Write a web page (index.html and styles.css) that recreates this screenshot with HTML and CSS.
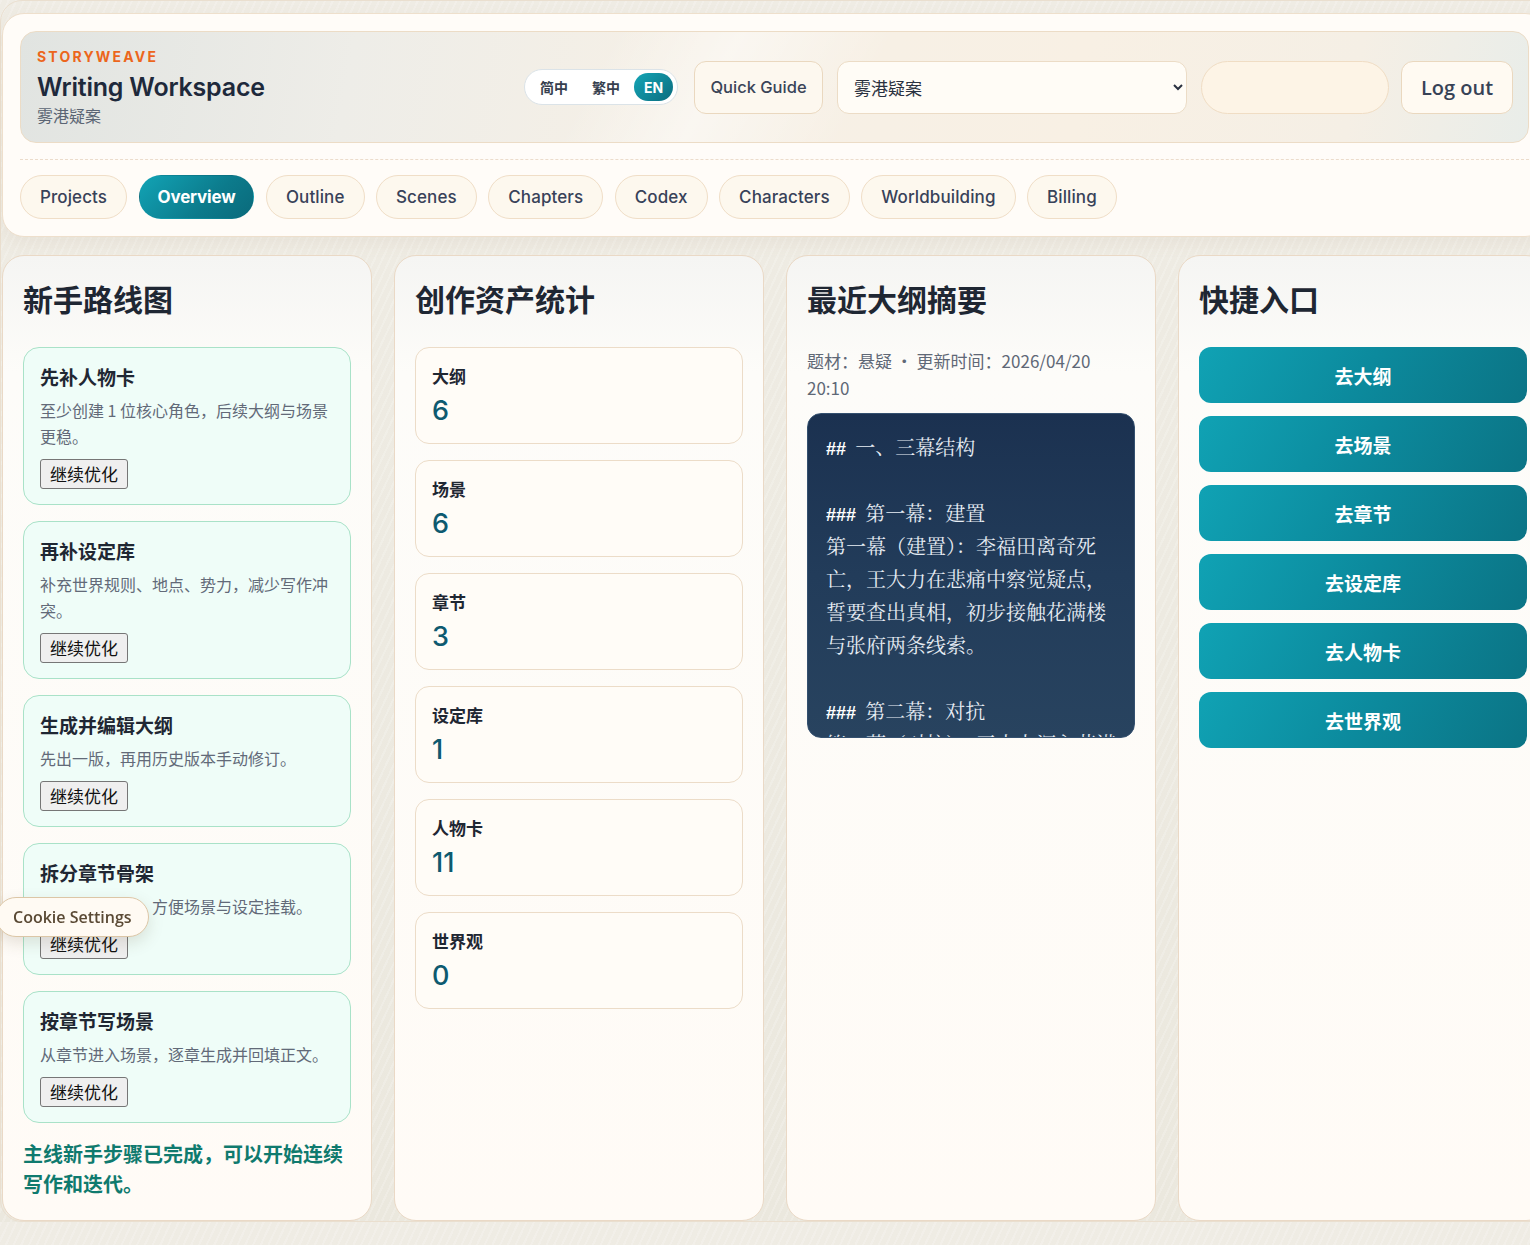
FILE: index.html
```html
<!DOCTYPE html>
<html lang="zh-CN">
<head>
<meta charset="utf-8">
<title>Writing Workspace</title>
<link rel="stylesheet" href="styles.css">
</head>
<body>
<div class="shell">
  <header class="topbar">
    <div class="hero">
      <div class="brand">
        <div class="eyebrow">STORYWEAVE</div>
        <h1 class="title">Writing Workspace</h1>
        <div class="subtitle">雾港疑案</div>
      </div>
      <div class="controls">
        <div class="lang">
          <button class="lang-item">简中</button>
          <button class="lang-item">繁中</button>
          <button class="lang-item active">EN</button>
        </div>
        <button class="ctl-btn guide">Quick Guide</button>
        <select class="project-select">
          <option>雾港疑案</option>
        </select>
        <div class="user-pill"></div>
        <button class="ctl-btn logout">Log out</button>
      </div>
    </div>
    <nav class="tabs">
      <a class="tab">Projects</a>
      <a class="tab active">Overview</a>
      <a class="tab">Outline</a>
      <a class="tab">Scenes</a>
      <a class="tab">Chapters</a>
      <a class="tab">Codex</a>
      <a class="tab">Characters</a>
      <a class="tab">Worldbuilding</a>
      <a class="tab">Billing</a>
    </nav>
  </header>

  <main class="grid">
    <section class="panel">
      <h2 class="panel-title">新手路线图</h2>
      <div class="steps">
        <div class="step">
          <h3 class="step-title">先补人物卡</h3>
          <p class="step-desc">至少创建 1 位核心角色，后续大纲与场景更稳。</p>
          <button class="step-btn">继续优化</button>
        </div>
        <div class="step">
          <h3 class="step-title">再补设定库</h3>
          <p class="step-desc">补充世界规则、地点、势力，减少写作冲突。</p>
          <button class="step-btn">继续优化</button>
        </div>
        <div class="step">
          <h3 class="step-title">生成并编辑大纲</h3>
          <p class="step-desc">先出一版，再用历史版本手动修订。</p>
          <button class="step-btn">继续优化</button>
        </div>
        <div class="step">
          <h3 class="step-title">拆分章节骨架</h3>
          <p class="step-desc">先建 3 章以上，方便场景与设定挂载。</p>
          <button class="step-btn">继续优化</button>
        </div>
        <div class="step">
          <h3 class="step-title">按章节写场景</h3>
          <p class="step-desc">从章节进入场景，逐章生成并回填正文。</p>
          <button class="step-btn">继续优化</button>
        </div>
      </div>
      <p class="done">主线新手步骤已完成，可以开始连续写作和迭代。</p>
    </section>

    <section class="panel">
      <h2 class="panel-title">创作资产统计</h2>
      <div class="stats">
        <div class="stat"><div class="stat-label">大纲</div><div class="stat-value">6</div></div>
        <div class="stat"><div class="stat-label">场景</div><div class="stat-value">6</div></div>
        <div class="stat"><div class="stat-label">章节</div><div class="stat-value">3</div></div>
        <div class="stat"><div class="stat-label">设定库</div><div class="stat-value">1</div></div>
        <div class="stat"><div class="stat-label">人物卡</div><div class="stat-value">11</div></div>
        <div class="stat"><div class="stat-label">世界观</div><div class="stat-value">0</div></div>
      </div>
    </section>

    <section class="panel">
      <h2 class="panel-title">最近大纲摘要</h2>
      <p class="meta">题材：悬疑 · 更新时间：2026/04/20 20:10</p>
      <pre class="outline"><span class="hash">##</span> 一、三幕结构

<span class="hash">###</span> 第一幕：建置
第一幕（建置）：李福田离奇死亡，王大力在悲痛中察觉疑点，誓要查出真相，初步接触花满楼与张府两条线索。

<span class="hash">###</span> 第二幕：对抗
第二幕（对抗）：王大力深入花满楼与张府，线索层层交织，真相逐渐浮出水面。</pre>
    </section>

    <section class="panel">
      <h2 class="panel-title">快捷入口</h2>
      <div class="quick">
        <button class="quick-btn">去大纲</button>
        <button class="quick-btn">去场景</button>
        <button class="quick-btn">去章节</button>
        <button class="quick-btn">去设定库</button>
        <button class="quick-btn">去人物卡</button>
        <button class="quick-btn">去世界观</button>
      </div>
    </section>
  </main>
</div>

<button class="cookie">Cookie Settings</button>
</body>
</html>
```

FILE: styles.css
```css
html, body {
  overflow: hidden;
}

body {
  margin: 0;
  background-color: #eeebe2;
  background-image:
    repeating-linear-gradient(115deg, rgba(255,255,255,0.18) 0 2px, rgba(0,0,0,0) 2px 7px),
    linear-gradient(180deg, #efece4, #ebe8de);
  font-family: Inter, "Noto Sans CJK SC", sans-serif;
  color: #1f2733;
}

.shell {
  width: 1560px;
  border: 1px solid #eadfcf;
  border-radius: 22px;
  padding: 12px 0 0 0;
  box-sizing: border-box;
}

/* ---------- top bar ---------- */
.topbar {
  width: 1545px;
  margin-left: 1px;
  box-sizing: border-box;
  background: #fffcf8;
  border: 1px solid #eedfcc;
  border-radius: 22px;
  padding: 17px 17px 17px 17px;
  box-shadow: 0 6px 18px rgba(150, 120, 80, 0.08);
}

.hero {
  display: flex;
  align-items: center;
  justify-content: space-between;
  height: 112px;
  box-sizing: border-box;
  padding: 0 15px 0 16px;
  border: 1px solid #ecdcc6;
  border-radius: 16px;
  background:
    linear-gradient(118deg, rgba(255,255,255,0) 38%, rgba(255,255,255,0.45) 46%, rgba(255,255,255,0) 56%),
    linear-gradient(100deg, #e1e4e1 0%, #eeede8 22%, #f6f0e6 45%, #f8f0e4 70%, #f5efe5 88%, #e9ede9 100%);
}

.brand {
  display: flex;
  flex-direction: column;
}

.eyebrow {
  font-size: 14px;
  line-height: 18px;
  font-weight: 700;
  letter-spacing: 2.2px;
  color: #ec661c;
}

.title {
  margin: 5px 0 0;
  font-size: 25px;
  line-height: 32px;
  font-weight: 600;
  color: #1e293b;
  letter-spacing: -0.2px;
}

.subtitle {
  margin-top: 0;
  font-family: "Noto Sans CJK SC", sans-serif;
  font-size: 16px;
  line-height: 24px;
  color: #5b6574;
}

.controls {
  display: flex;
  align-items: center;
  gap: 14px;
}

.lang {
  display: flex;
  align-items: center;
  width: 154px;
  height: 36px;
  margin-right: 2px;
  box-sizing: border-box;
  padding: 0 3px;
  background: #ffffff;
  border: 1px solid #dbe3e8;
  border-radius: 18px;
}

.lang-item {
  border: 0;
  background: transparent;
  height: 28px;
  padding: 0 12px;
  border-radius: 14px;
  font-family: "Noto Sans CJK SC", sans-serif;
  font-size: 14px;
  font-weight: 700;
  color: #363f4e;
}

.lang-item.active {
  margin-left: 2px;
  padding: 0 10px;
  font-family: Inter, sans-serif;
  color: #ffffff;
  background: linear-gradient(135deg, #14a5b6, #0b6c7e);
}

.ctl-btn {
  height: 53px;
  box-sizing: border-box;
  background: #fdf8ef;
  border: 1px solid #ead8bf;
  border-radius: 12px;
  color: #3a4458;
}

.guide {
  width: 129px;
  font-family: Inter, sans-serif;
  font-size: 16.5px;
  font-weight: 500;
}

.project-select {
  width: 350px;
  height: 53px;
  box-sizing: border-box;
  padding: 0 12px;
  background-color: #fffcf6;
  border: 1px solid #ecdcc6;
  border-radius: 12px;
  font-family: "Noto Sans CJK SC", sans-serif;
  font-size: 17px;
  color: #2a3140;
}

.user-pill {
  width: 188px;
  height: 53px;
  margin-right: -2px;
  box-sizing: border-box;
  background: #fdf4e6;
  border: 1px solid #f0ddc4;
  border-radius: 27px;
}

.logout {
  width: 112px;
  background: #fffaf2;
  font-family: "Open Sans", sans-serif;
  font-size: 20px;
  font-weight: 600;
  color: #374256;
}

.tabs {
  display: flex;
  gap: 11.5px;
  margin-top: 16px;
  padding-top: 15px;
  border-top: 1px dashed #ecdccb;
}

.tab {
  display: flex;
  align-items: center;
  height: 44px;
  box-sizing: border-box;
  padding: 0 19px;
  background: #fdf8ee;
  border: 1px solid #f0dec7;
  border-radius: 22px;
  font-size: 17px;
  font-weight: 500;
  letter-spacing: 0.1px;
  color: #384259;
}

.tab.active {
  padding: 0 18px;
  border-color: transparent;
  background: linear-gradient(135deg, #12a3b5 0%, #0c7b8c 60%, #0a6a7b 100%);
  color: #ffffff;
  font-weight: 700;
  letter-spacing: -0.2px;
}

/* ---------- grid ---------- */
.grid {
  display: grid;
  grid-template-columns: repeat(4, 370px);
  gap: 22px;
  margin-top: 18px;
  margin-left: 1px;
  font-family: "Noto Sans CJK SC", sans-serif;
}

.panel {
  box-sizing: border-box;
  border: 1px solid #ead9c6;
  border-radius: 22px;
  padding: 24px 20px 21px;
  background: linear-gradient(180deg, #f5f5f3 0%, #fdfcf9 12%, #fffbf6 100%);
}

.panel-title {
  margin: 0 0 31px;
  font-size: 30px;
  line-height: 36px;
  font-weight: 700;
  color: #1f2733;
}

/* steps */
.steps {
  display: flex;
  flex-direction: column;
  gap: 16px;
}

.step {
  border: 1px solid #a9e2c8;
  border-radius: 16px;
  background: #effdf8;
  padding: 16px 16px 15px;
}

.step-title {
  margin: 0 0 7px;
  font-size: 19px;
  line-height: 26px;
  font-weight: 700;
  color: #1f2733;
}

.step-desc {
  margin: 0 0 10px;
  font-size: 16px;
  line-height: 26px;
  color: #626a78;
}

.step-btn {
  display: block;
  height: 30px;
  box-sizing: border-box;
  padding: 0 9px;
  font-family: "Noto Sans CJK SC", sans-serif;
  font-size: 17px;
  line-height: 26px;
  color: #111111;
  background: #efefef;
  border: 1px solid #767676;
  border-radius: 3px;
}

.done {
  margin: 16px 0 0;
  font-size: 20px;
  line-height: 30px;
  font-weight: 700;
  color: #0f7a6e;
}

/* stats */
.stats {
  display: flex;
  flex-direction: column;
  gap: 16px;
}

.stat {
  border: 1px solid #ecdcc8;
  border-radius: 14px;
  background: #fffcf7;
  padding: 15px 16px 14px;
}

.stat-label {
  font-size: 17px;
  line-height: 25px;
  font-weight: 700;
  color: #1f2733;
}

.stat-value {
  margin-top: 5px;
  font-family: Inter, sans-serif;
  font-size: 27px;
  line-height: 36px;
  font-weight: 500;
  color: #0e5a70;
}

/* outline */
.meta {
  margin: 0 0 12px;
  font-size: 17px;
  line-height: 27px;
  color: #5f6876;
}

.outline {
  margin: 0;
  height: 325px;
  box-sizing: border-box;
  overflow: hidden;
  padding: 16px 18px 0;
  border: 1px solid #34506f;
  border-radius: 14px;
  background: linear-gradient(180deg, #1b3150 0%, #223c5a 50%, #28435f 100%);
  color: #e7edf4;
  font-family: "Noto Serif CJK SC", "Liberation Serif", serif;
  font-size: 20px;
  line-height: 33px;
  white-space: pre-wrap;
  word-break: break-all;
}

.hash {
  font-family: "Liberation Sans", sans-serif;
  font-weight: 700;
  font-size: 18px;
  line-height: 1;
  margin-right: 4px;
  color: #ffffff;
}

/* quick */
.quick {
  display: flex;
  flex-direction: column;
  gap: 13px;
}

.quick-btn {
  height: 56px;
  border: 0;
  border-radius: 12px;
  background: linear-gradient(120deg, #10a2b4 0%, #0c8a9d 50%, #0b7485 100%);
  color: #ffffff;
  font-family: "Noto Sans CJK SC", sans-serif;
  font-size: 19px;
  font-weight: 700;
}

/* cookie */
.cookie {
  position: fixed;
  left: -4px;
  top: 897px;
  height: 40px;
  padding: 0 16px;
  background: #fffaf3;
  border: 1px solid #dcc6a6;
  border-radius: 20px;
  box-shadow: 0 6px 16px rgba(90, 70, 40, 0.15);
  font-family: "Open Sans", sans-serif;
  font-size: 16px;
  font-weight: 600;
  color: #5a4934;
}
```
